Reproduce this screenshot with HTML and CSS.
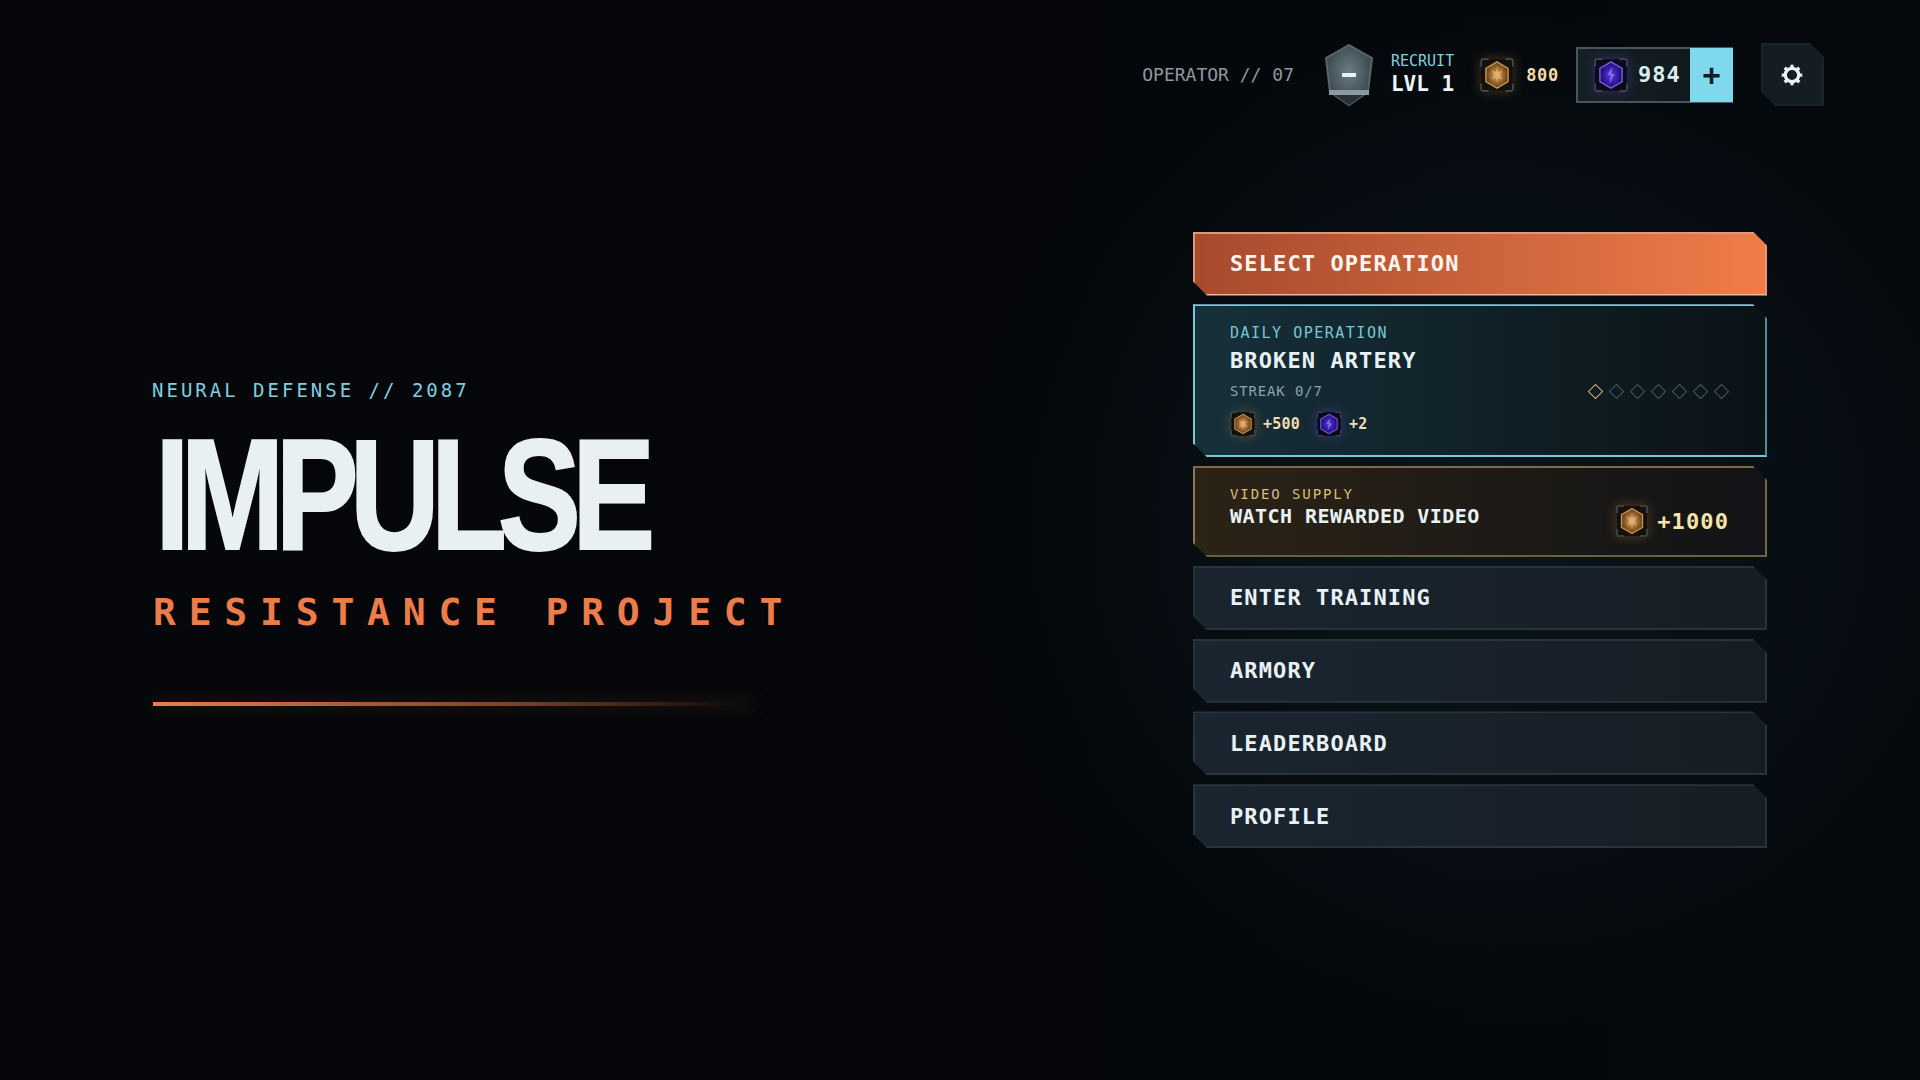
FILE: index.html
```html
<!DOCTYPE html>
<html lang="en">
<head>
    <meta charset="UTF-8">
    <meta name="viewport" content="width=device-width, initial-scale=1.0">
    <title>Impulse — Resistance Project</title>
    <link rel="stylesheet" href="styles.css">
</head>
<body>
    <svg class="icon-defs" width="0" height="0" aria-hidden="true">
        <defs>
            <radialGradient id="coinFill" cx="0.5" cy="0.5" r="0.55">
                <stop offset="0" stop-color="#d8a45c"/>
                <stop offset="0.6" stop-color="#94602a"/>
                <stop offset="1" stop-color="#4e3012"/>
            </radialGradient>
            <radialGradient id="gemFill" cx="0.5" cy="0.5" r="0.55">
                <stop offset="0" stop-color="#5a3ee0"/>
                <stop offset="0.6" stop-color="#3418a0"/>
                <stop offset="1" stop-color="#180a58"/>
            </radialGradient>
            <symbol id="coin" viewBox="0 0 36 36">
                <rect x="3" y="3" width="30" height="30" rx="3" fill="#14100b"/>
                <path d="M3 10V5a2 2 0 0 1 2-2h5M26 3h5a2 2 0 0 1 2 2v5M33 26v5a2 2 0 0 1-2 2h-5M10 33H5a2 2 0 0 1-2-2v-5" fill="none" stroke="#454a4c" stroke-width="1.600"/>
                <polygon points="18,5.500 28.500,11.700 28.500,24.300 18,30.500 7.500,24.300 7.500,11.700" fill="url(#coinFill)" stroke="#c09450" stroke-width="1.400"/>
                <path d="M18 10.500l1.300 4.600 3.900-1.600-2.200 4.500 2.200 4.500-3.900-1.600-1.300 4.600-1.300-4.600-3.900 1.600 2.200-4.500-2.200-4.500 3.900 1.600z" fill="#ecc488" opacity="0.55"/>
            </symbol>
            <symbol id="gem" viewBox="0 0 36 36">
                <rect x="3" y="3" width="30" height="30" rx="3" fill="#0c0a1a"/>
                <path d="M3 10V5a2 2 0 0 1 2-2h5M26 3h5a2 2 0 0 1 2 2v5M33 26v5a2 2 0 0 1-2 2h-5M10 33H5a2 2 0 0 1-2-2v-5" fill="none" stroke="#3f4650" stroke-width="1.600"/>
                <polygon points="18,5.500 28.500,11.700 28.500,24.300 18,30.500 7.500,24.300 7.500,11.700" fill="url(#gemFill)" stroke="#7060e0" stroke-width="1.400"/>
                <path d="M19.500 10l-5 8h3.200l-1.200 8 5-9h-3.200z" fill="#a898ff" opacity="0.6"/>
            </symbol>
        </defs>
    </svg>

    <div class="page">
        <header class="topbar">
            <span class="operator">OPERATOR // 07</span>
            <svg class="rank-badge" width="48" height="62" viewBox="0 0 48 62">
                <defs>
                    <radialGradient id="badgeFill" cx="0.5" cy="0.45" r="0.6">
                        <stop offset="0" stop-color="#6a7c84"/>
                        <stop offset="1" stop-color="#353f45"/>
                    </radialGradient>
                </defs>
                <polygon points="24,1 47,14 43,48 24,61 5,48 1,14" fill="url(#badgeFill)" stroke="#59656a" stroke-width="2"/>
                <polygon points="5,48 43,48 24,61" fill="#2a3236"/>
                <rect x="4" y="46" width="40" height="5" fill="#8a9aa2"/>
                <rect x="17" y="29" width="14" height="4" fill="#e6f1f5"/>
            </svg>
            <div class="rank-text">
                <span class="rank-name">RECRUIT</span>
                <span class="rank-level">LVL 1</span>
            </div>
            <div class="coin-stat">
                <svg class="icon-coin icon-top"><use href="#coin"/></svg>
                <span class="coin-value">800</span>
            </div>
            <div class="gem-stat">
                <div class="gem-value">
                    <svg class="icon-gem icon-top"><use href="#gem"/></svg>
                    <span>984</span>
                </div>
                <div class="gem-add">+</div>
            </div>
            <button class="settings-btn" type="button" aria-label="Settings">
                <svg width="26" height="26" viewBox="0 0 24 24">
                    <circle cx="12" cy="12" r="6.200" fill="none" stroke="#e8f2f5" stroke-width="3"/>
                    <path d="M12 2.500v3M12 18.500v3M2.500 12h3M18.500 12h3M5.300 5.300l2.100 2.100M16.600 16.600l2.100 2.100M18.700 5.300l-2.100 2.100M7.400 16.600l-2.100 2.100" stroke="#e8f2f5" stroke-width="3"/>
                </svg>
            </button>
        </header>

        <main class="content">
            <section class="hero">
                <div class="hero-label">NEURAL DEFENSE // 2087</div>
                <h1 class="hero-title">IMPULSE</h1>
                <div class="hero-sub">RESISTANCE PROJECT</div>
                <div class="hero-line"></div>
            </section>

            <nav class="menu">
                <div class="menu-item menu-primary">SELECT OPERATION</div>

                <div class="menu-card card-daily">
                    <div class="card-label">DAILY OPERATION</div>
                    <div class="card-title">BROKEN ARTERY</div>
                    <div class="streak-row">
                        <span class="streak-text">STREAK 0/7</span>
                        <div class="streak-marks">
                            <i class="mark mark-on"></i>
                            <i class="mark"></i>
                            <i class="mark"></i>
                            <i class="mark"></i>
                            <i class="mark"></i>
                            <i class="mark"></i>
                            <i class="mark"></i>
                        </div>
                    </div>
                    <div class="reward-row">
                        <svg class="icon-coin"><use href="#coin"/></svg>
                        <span class="reward-value">+500</span>
                        <svg class="icon-gem reward-gem"><use href="#gem"/></svg>
                        <span class="reward-value">+2</span>
                    </div>
                </div>

                <div class="menu-card card-video">
                    <div>
                        <div class="card-label">VIDEO SUPPLY</div>
                        <div class="video-title">WATCH REWARDED VIDEO</div>
                    </div>
                    <div class="video-reward">
                        <svg class="icon-coin icon-video"><use href="#coin"/></svg>
                        <span>+1000</span>
                    </div>
                </div>

                <div class="menu-item">ENTER TRAINING</div>
                <div class="menu-item">ARMORY</div>
                <div class="menu-item">LEADERBOARD</div>
                <div class="menu-item">PROFILE</div>
            </nav>
        </main>
    </div>
</body>
</html>
```

FILE: styles.css
```css
* {
    box-sizing: border-box;
    margin: 0;
    padding: 0;
}
body {
    background: #05070a;
    color: #e8f2f5;
    font-family: 'DejaVu Sans Mono', monospace;
    overflow: hidden;
}
.icon-defs {
    position: absolute;
}
.page {
    width: 1920px;
    height: 1080px;
    background:
        radial-gradient(ellipse 520px 520px at 1480px 520px, rgba(18,48,58,0.38), transparent 100%),
        linear-gradient(90deg, #05070a, #040609 50%, #05090d);
}

/* top bar */
.topbar {
    display: flex;
    justify-content: flex-end;
    align-items: center;
    padding: 43px 96px 0 0;
}
.operator {
    font-size: 18px;
    color: #8a9aa0;
    margin-right: 31px;
}
.rank-badge {
    margin-right: 18px;
}
.rank-text {
    display: flex;
    flex-direction: column;
    margin-right: 24px;
}
.rank-name {
    font-size: 15px;
    line-height: 18px;
    color: #7fd0de;
}
.rank-level {
    font-size: 21px;
    line-height: 26px;
    margin-top: 1px;
    font-weight: 700;
    color: #eef5f7;
}
.coin-stat {
    display: flex;
    align-items: center;
    gap: 10px;
    margin-right: 17px;
}
.coin-value {
    font-size: 17px;
    font-weight: 700;
    letter-spacing: 0.7px;
    color: #f5dca8;
}
.icon-coin,
.icon-gem {
    width: 28px;
    height: 28px;
    flex-shrink: 0;
}
.icon-coin {
    filter: drop-shadow(0 0 6px rgba(224,150,70,0.3));
}
.icon-gem {
    filter: drop-shadow(0 0 6px rgba(110,80,240,0.35));
}
.icon-top {
    width: 38px;
    height: 38px;
}
.gem-stat {
    display: flex;
    width: 157px;
    height: 56px;
    border: 2px solid #46585c;
    border-right: none;
    background: linear-gradient(90deg, #151f24, #10171b);
    margin-right: 28px;
}
.gem-value {
    flex: 1;
    display: flex;
    align-items: center;
    gap: 8px;
    padding-left: 14px;
    font-size: 22px;
    font-weight: 700;
    letter-spacing: 1px;
    color: #dcecf0;
}
.gem-add {
    width: 43px;
    margin: -1px 0;
    background: #7fd8ec;
    color: #0d2028;
    font-size: 30px;
    font-weight: 700;
    line-height: 54px;
    text-align: center;
}
.settings-btn {
    width: 63px;
    height: 63px;
    padding-right: 2px;
    border: 2px solid #1a242b;
    background: #151d24;
    clip-path: polygon(0 0, calc(100% - 14px) 0, 100% 14px, 100% 100%, 14px 100%, 0 calc(100% - 14px));
    display: flex;
    align-items: center;
    justify-content: center;
}

/* main area */
.content {
    display: flex;
    justify-content: space-between;
    align-items: flex-start;
    padding: 125.500px 153px 0 152px;
}
.hero {
    padding-top: 147px;
}
.hero-label {
    font-size: 19px;
    line-height: 22px;
    letter-spacing: 3px;
    color: #7fcfe0;
}
.hero-title {
    font-family: 'Liberation Sans', Arial, sans-serif;
    font-size: 158px;
    font-weight: 700;
    letter-spacing: -11.500px;
    color: #e8f0f4;
    -webkit-text-stroke: 2px #e8f0f4;
    transform: scaleX(0.79);
    transform-origin: left center;
    margin: 3px 0 6px 3px;
    white-space: nowrap;
}
.hero-sub {
    font-size: 38px;
    line-height: 42px;
    font-weight: 700;
    letter-spacing: 12.800px;
    color: #ec7c4a;
    margin-left: 1px;
    white-space: nowrap;
}
.hero-line {
    width: 604px;
    height: 4px;
    margin: 69px 0 0 1px;
    background: linear-gradient(90deg, #ec7c4a, rgba(236,124,74,0.5) 60%, transparent);
    box-shadow: 0 0 18px rgba(236,124,74,0.3);
}

/* menu */
.menu {
    width: 574px;
    display: flex;
    flex-direction: column;
    gap: 8.800px;
}
.menu-item,
.menu-card {
    clip-path: polygon(0 0, calc(100% - 14px) 0, 100% 14px, 100% 100%, 14px 100%, 0 calc(100% - 14px));
}
.menu-item {
    height: 64px;
    padding-left: 35px;
    display: flex;
    align-items: center;
    font-size: 22px;
    font-weight: 700;
    letter-spacing: 1.100px;
    color: #e8f2f5;
    background: linear-gradient(90deg, #1a2530, #161e25);
    border: 2px solid #28333c;
}
.menu-primary {
    background: linear-gradient(90deg, #a64a2e, #f07c48);
    border-color: #e09878;
    border-bottom-color: #f0b898;
    color: #fff4ee;
}
.menu-card {
    padding: 18px 35px 0 35px;
}
.card-daily {
    height: 153px;
    border: 2px solid #7cc8da;
    border-right-color: #4e8f94;
    background: linear-gradient(90deg, #16303a, #0b1216);
}
.card-video {
    height: 91px;
    padding-top: 17px;
    padding-right: 36px;
    display: flex;
    justify-content: space-between;
    align-items: flex-start;
    border: 2px solid #8a7a50;
    border-top-color: #85684a;
    border-right-color: #75693c;
    border-bottom-color: #6b6338;
    background: linear-gradient(90deg, #2c2316, #111316);
}
.card-label {
    font-size: 15px;
    line-height: 18px;
    letter-spacing: 1.500px;
    color: #79c6d6;
}
.card-title {
    font-size: 22px;
    line-height: 28px;
    font-weight: 700;
    letter-spacing: 1.100px;
    margin-top: 5px;
}
.streak-row {
    display: flex;
    justify-content: space-between;
    align-items: center;
    margin-top: 8px;
    padding-right: 3px;
}
.streak-text {
    font-size: 14px;
    letter-spacing: 0.840px;
    color: #8fa3aa;
}
.streak-marks {
    display: flex;
    gap: 10px;
}
.mark {
    width: 11px;
    height: 11px;
    border: 1.500px solid #44595c;
    transform: rotate(45deg);
}
.mark-on {
    border-color: #d8b070;
}
.reward-row {
    display: flex;
    align-items: center;
    gap: 6px;
    margin: 11px 0 0 -1px;
}
.reward-value {
    font-size: 15px;
    font-weight: 700;
    letter-spacing: 0.200px;
    color: #f2dcae;
}
.reward-gem {
    margin-left: 9px;
}
.card-video .card-label {
    font-size: 14px;
    color: #d8bd78;
    letter-spacing: 1.900px;
}
.video-title {
    font-size: 20px;
    line-height: 25px;
    margin-top: 1px;
    font-weight: 700;
    letter-spacing: 0.450px;
}
.video-reward {
    display: flex;
    align-items: center;
    gap: 7px;
    margin-top: 18px;
    font-size: 22px;
    font-weight: 700;
    letter-spacing: 1.100px;
    color: #f6e4a8;
}
.icon-video {
    width: 36px;
    height: 36px;
}
```
